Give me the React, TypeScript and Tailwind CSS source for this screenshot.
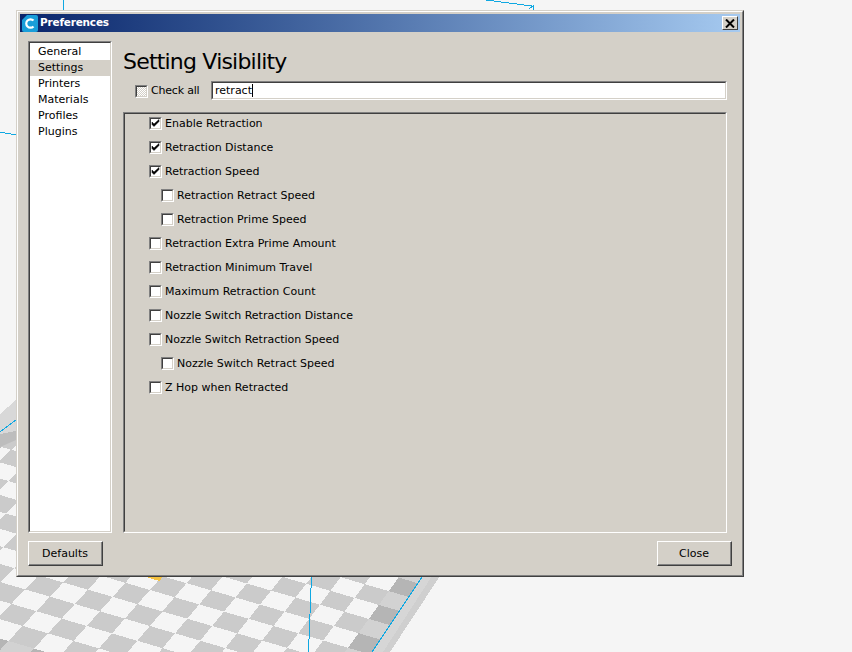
import React from "react";

const font = "font-['DejaVu_Sans',sans-serif]";

// board behind the dialog: lattice index (i, j) to screen, fitted on the reference
function project(i: number, j: number) {
  const w = 1 - 0.00085 * i - 0.00932 * j;
  const x = (50 + 24.86 * i - 13.9 * j) / w;
  const y = (596.7 + 6.79 * i + 8.79 * j) / w;
  return `${x.toFixed(1)},${y.toFixed(1)}`;
}

function cell(i: number, j: number) {
  return `${project(i, j)} ${project(i + 1, j)} ${project(i + 1, j + 1)} ${project(i, j + 1)}`;
}

function Board() {
  const cells: React.ReactNode[] = [];
  for (let i = -12; i < 12; i++) {
    for (let j = -24; j < 4; j++) {
      const even = (i + j + 100) % 2 === 0;
      const border = i === 11 || j === 3;
      if (!border && !even) continue;
      cells.push(
        <polygon key={`${i}_${j}`} points={cell(i, j)} fill={border ? (even ? "#b5b5b5" : "#d2d2d2") : "#cbcbcb"} />
      );
    }
  }
  return (
    <svg className="absolute inset-0" width="852" height="652" viewBox="0 0 852 652" shapeRendering="crispEdges">
      <defs>
        <clipPath id="bed">
          <polygon points="0,447 16,440 500,440 422,577 372,652 0,652" />
        </clipPath>
      </defs>
      <polygon points="440,576 390,652 372,652 422,576" fill="#d6d6d6" />
      <polygon points="440,576 390,652 383,652 432,576" fill="#cfcfcf" />
      <polygon points="0,414 16,400 16,432 0,445" fill="#d8d8d8" />
      <polygon points="0,434 16,431 16,441 0,448" fill="#bdbdbd" />
      <g clipPath="url(#bed)">{cells}</g>
      <polygon points="145,576 163,576 160,581 152,579" fill="#f5c242" />
      <polyline points="422,577 372,652" fill="none" stroke="#0fa8e2" strokeWidth="1" />
      <polyline points="311.5,576 308.5,652" fill="none" stroke="#0fa8e2" strokeWidth="1" />
      <polyline points="63.5,0 63.5,10" fill="none" stroke="#0fa8e2" strokeWidth="1" />
      <polyline points="0,132 16,135" fill="none" stroke="#0fa8e2" strokeWidth="1" />
      <polyline points="0,432 16,420" fill="none" stroke="#0fa8e2" strokeWidth="1" />
      <polyline points="486,0 532,6" fill="none" stroke="#0fa8e2" strokeWidth="1" />
      <polyline points="529,9 533,6 533,10" fill="none" stroke="#0fa8e2" strokeWidth="1" />
    </svg>
  );
}

function Logo() {
  return (
    <svg width="16" height="17" viewBox="0 0 16 17" className="shrink-0">
      <path d="M5 0 H14 Q16 0 16 2 V15 Q16 17 14 17 H2 Q0 17 0 15 V5 Z" fill="#1a9ed9" />
      <path d="M11.5 5.6 A4.2 4.2 0 1 0 11.5 11.4" fill="none" stroke="#fff" strokeWidth="2.2" />
    </svg>
  );
}

function CheckBox({ checked, dithered }: { checked?: boolean; dithered?: boolean }) {
  return (
    <div className="w-[13px] h-[13px] shrink-0 border border-t-[#808080] border-l-[#808080] border-b-white border-r-white">
      <div
        className={
          "w-full h-full border border-t-[#404040] border-l-[#404040] border-b-[#d4d0c8] border-r-[#d4d0c8] " +
          (dithered ? "bg-[repeating-conic-gradient(#d4d0c8_0_25%,#ffffff_0_50%)] bg-[length:2px_2px]" : "bg-white")
        }
      >
        {checked && (
          <svg width="9" height="9" viewBox="0 0 9 9" className="block">
            <path d="M1 3 V5.5 L3 7.5 L8 2.5 V0.5 L3 5 Z" fill="#000" stroke="#000" strokeWidth="0.5" />
          </svg>
        )}
      </div>
    </div>
  );
}

function Sunken({ className, children }: { className: string; children?: React.ReactNode }) {
  return (
    <div className={"border border-t-[#808080] border-l-[#808080] border-b-white border-r-white " + className}>
      <div className="w-full h-full border border-t-[#404040] border-l-[#404040] border-b-[#d4d0c8] border-r-[#d4d0c8]">
        {children}
      </div>
    </div>
  );
}

function Button({ label }: { label: string }) {
  return (
    <div className="w-[75px] h-[25px] border border-t-white border-l-white border-b-[#404040] border-r-[#404040] bg-[#d4d0c8]">
      <div className="w-full h-full flex items-center justify-center pt-[3px] border-b border-r border-b-[#808080] border-r-[#808080] text-[11px] text-black">
        {label}
      </div>
    </div>
  );
}

const pages = ["General", "Settings", "Printers", "Materials", "Profiles", "Plugins"];

const settings = [
  { label: "Enable Retraction", checked: true },
  { label: "Retraction Distance", checked: true },
  { label: "Retraction Speed", checked: true },
  { label: "Retraction Retract Speed", child: true },
  { label: "Retraction Prime Speed", child: true },
  { label: "Retraction Extra Prime Amount" },
  { label: "Retraction Minimum Travel" },
  { label: "Maximum Retraction Count" },
  { label: "Nozzle Switch Retraction Distance" },
  { label: "Nozzle Switch Retraction Speed" },
  { label: "Nozzle Switch Retract Speed", child: true },
  { label: "Z Hop when Retracted" },
];

export default function App() {
  return (
    <div className={"relative w-[852px] h-[652px] overflow-hidden bg-[#f5f5f5] " + font}>
      <Board />

      {/* Dialog window */}
      <div className="absolute left-4 top-[10px] w-[728px] h-[567px] border border-t-[#d4d0c8] border-l-[#d4d0c8] border-b-[#404040] border-r-[#404040]">
        <div className="w-full h-full flex flex-col border border-t-white border-l-white border-b-[#808080] border-r-[#808080] bg-[#d4d0c8] p-[2px]">
          {/* Title bar */}
          <div className="h-[18px] shrink-0 flex items-center px-[2px] bg-gradient-to-r from-[#0a246a] to-[#a6caf0]">
            <Logo />
            <span className="ml-[2px] text-[10.5px] tracking-[-0.2px] font-bold text-white">Preferences</span>
            <div className="ml-auto w-4 h-[14px] border border-t-white border-l-white border-b-[#404040] border-r-[#404040] bg-[#d4d0c8] flex items-center justify-center">
              <svg width="10" height="9" viewBox="0 0 10 9">
                <path d="M1 0.5 L9 8.5 M9 0.5 L1 8.5" stroke="#000" strokeWidth="2" />
              </svg>
            </div>
          </div>

          {/* Body */}
          <div className="flex-1 flex flex-col px-2 pt-[9px] pb-2">
            <div className="flex-1 flex">
              <Sunken className="w-[84px] h-[492px] shrink-0">
                <div className="bg-white h-full pt-[1px]">
                  {pages.map((p) => (
                    <div
                      key={p}
                      className={"h-4 pl-2 leading-4 text-[11px] text-black " + (p === "Settings" ? "bg-[#d4d0c8]" : "")}
                    >
                      {p}
                    </div>
                  ))}
                </div>
              </Sunken>

              <div className="ml-[11px] flex-1 flex flex-col">
                <div className="h-[40px] pt-[1px] text-[22px] tracking-[-0.8px] leading-[40px] text-black whitespace-nowrap">
                  Setting Visibility
                </div>
                <div className="h-[31px] flex items-start pl-3">
                  <div className="w-[76px] shrink-0 mt-[2px] flex items-center">
                    <CheckBox dithered />
                    <span className="ml-[3px] text-[11px] tracking-[-0.2px] text-black">Check all</span>
                  </div>
                  <Sunken className="w-[516px] h-[19px]">
                    <div className="h-full bg-white pl-[2px] text-[11px] leading-[15px] text-black flex items-center">
                      retract<span className="w-px h-[13px] bg-black" />
                    </div>
                  </Sunken>
                </div>
                <Sunken className="w-[604px] h-[421px]">
                  <div className="-mt-[3px] pl-6">
                    {settings.map((s) => (
                      <div key={s.label} className={"h-6 flex items-center " + (s.child ? "pl-3" : "")}>
                        <CheckBox checked={s.checked} />
                        <span className="ml-[3px] pt-[2px] text-[11px] text-black whitespace-nowrap">{s.label}</span>
                      </div>
                    ))}
                  </div>
                </Sunken>
              </div>
            </div>
            <div className="flex justify-between mt-2">
              <Button label="Defaults" />
              <Button label="Close" />
            </div>
          </div>
        </div>
      </div>
    </div>
  );
}
